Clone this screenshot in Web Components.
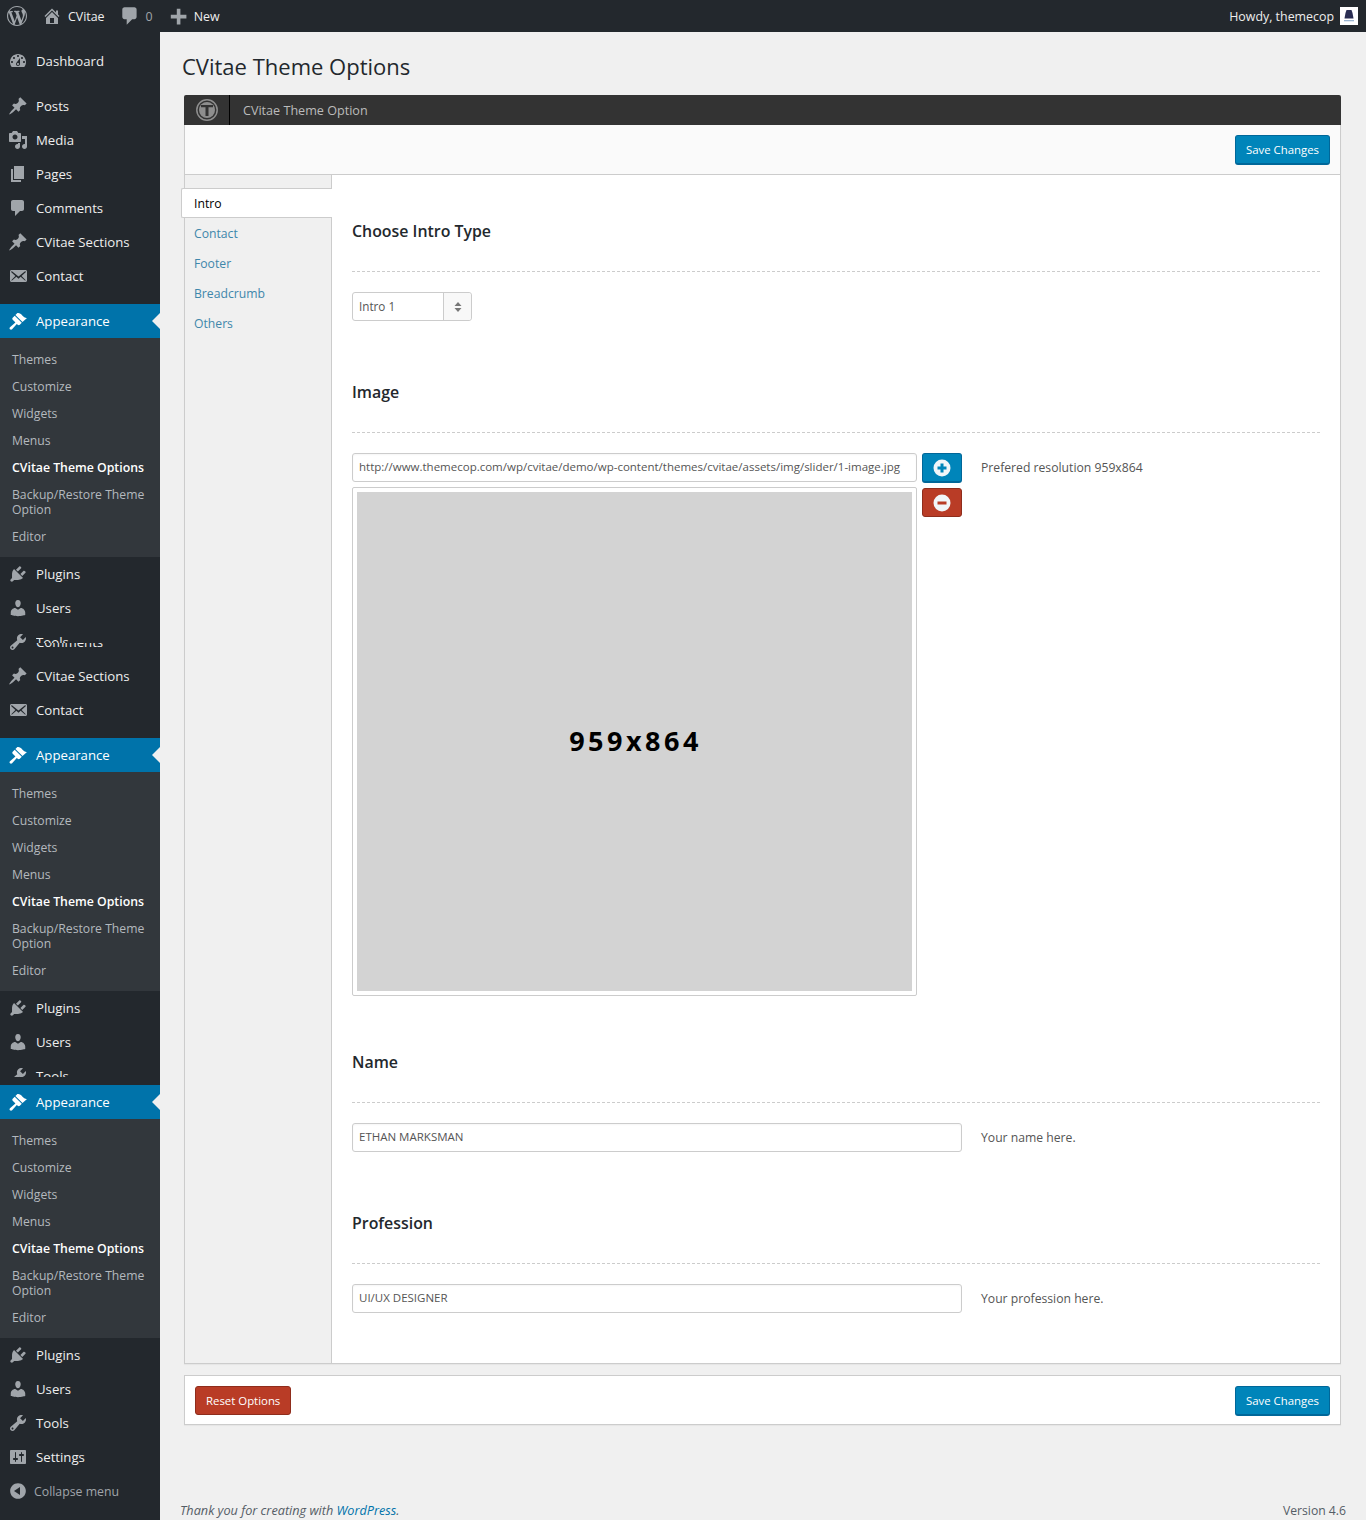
<!DOCTYPE html>
<html lang="en"><head><meta charset="utf-8"><title>CVitae Theme Options</title>
<style>
html,body{margin:0;padding:0}
body{font-family:"Open Sans","Liberation Sans",sans-serif;background:#f0f0f0;color:#444;width:1366px;min-height:1520px;overflow-x:hidden}
</style></head><body>
<wp-shell></wp-shell>
<script>
const P={
wp:'M20 10c0-5.510-4.490-10-10-10C4.480 0 0 4.490 0 10c0 5.520 4.480 10 10 10 5.510 0 10-4.480 10-10zM7.780 15.370L4.370 6.220c.550-.020 1.170-.080 1.170-.080.500-.060.440-1.130-.060-1.110 0 0-1.450.110-2.370.110-.180 0-.370 0-.580-.010C4.120 2.690 6.870 1.110 10 1.110c2.330 0 4.450.870 6.050 2.340-.680-.110-1.650.390-1.650 1.580 0 .740.450 1.360.900 2.100.350.610.550 1.360.550 2.460 0 1.490-1.400 5-1.400 5l-3.030-8.370c.540-.020.820-.170.820-.170.500-.050.440-1.250-.060-1.220 0 0-1.440.120-2.380.120-.870 0-2.330-.120-2.330-.120-.500-.030-.560 1.200-.060 1.220l.920.080 1.260 3.410zM17.410 10c.240-.640.740-1.870.430-4.250.700 1.290 1.050 2.710 1.050 4.250 0 3.290-1.730 6.240-4.400 7.780.970-2.590 1.940-5.210 2.920-7.780zM6.100 18.090C3.120 16.650 1.110 13.530 1.110 10c0-1.300.230-2.480.720-3.590C3.250 10.300 4.670 14.200 6.100 18.090zm4.030-6.630l2.580 6.980c-.860.290-1.760.450-2.710.450-.790 0-1.570-.110-2.290-.330.810-2.380 1.620-4.740 2.420-7.100z',
home:'M16 8.500l1.530 1.530-1.060 1.060L10 4.620l-6.470 6.470-1.060-1.060L10 2.500l4 4v-2h2v4zm-6-2.460l6 5.990V18H4v-5.970zM12 17v-5H8v5h4z',
plus:'M17 9v3h-5v5H9v-5H4V9h5V4h3v5h5z',
dashboard:'M3.760 16h12.480c1.100-1.370 1.760-3.110 1.760-5 0-4.420-3.580-8-8-8s-8 3.580-8 8c0 1.890.660 3.630 1.760 5zM10 4c.550 0 1 .450 1 1s-.450 1-1 1-1-.450-1-1 .450-1 1-1zM6 6c.550 0 1 .450 1 1s-.450 1-1 1-1-.450-1-1 .450-1 1-1zm8 0c.550 0 1 .450 1 1s-.450 1-1 1-1-.450-1-1 .450-1 1-1zm-5.370 5.550L12 7v6c0 1.100-.900 2-2 2s-2-.900-2-2c0-.570.240-1.080.630-1.450zM4 10c.550 0 1 .450 1 1s-.450 1-1 1-1-.450-1-1 .450-1 1-1zm12 0c.550 0 1 .450 1 1s-.450 1-1 1-1-.450-1-1 .450-1 1-1zm-5 3c0-.550-.450-1-1-1s-1 .450-1 1 .450 1 1 1 1-.450 1-1z',
post:'M10.440 3.020l1.820-1.820 6.360 6.350-1.830 1.820c-1.050-.680-2.480-.570-3.410.360l-.750.750c-.920.930-1.040 2.350-.350 3.410l-1.830 1.820-2.410-2.410-2.800 2.790c-.420.420-3.380 2.710-3.800 2.290s1.860-3.390 2.280-3.810l2.790-2.790L4.100 9.360l1.830-1.820c1.050.690 2.480.570 3.400-.360l.750-.750c.930-.920 1.050-2.350.360-3.410z',
media:'M13 11V4c0-.550-.450-1-1-1h-1.670L9 1H5L3.670 3H2c-.550 0-1 .450-1 1v7c0 .550.450 1 1 1h10c.550 0 1-.450 1-1zM7 4.500c1.380 0 2.500 1.120 2.500 2.500S8.380 9.500 7 9.500 4.500 8.380 4.500 7 5.620 4.500 7 4.500zM14 6h5v10.500c0 1.380-1.120 2.500-2.500 2.500S14 17.880 14 16.500s1.120-2.500 2.500-2.500c.170 0 .340.020.500.050V9h-3V6zm-4 8.050V13h2v3.500c0 1.380-1.120 2.500-2.500 2.500S7 17.880 7 16.500 8.120 14 9.500 14c.170 0 .340.020.500.050z',
page:'M6 15V2h10v13H6zm-1 1h8v2H3V5h2v11z',
comment:'M5 2h9c1.100 0 2 .900 2 2v7c0 1.100-.900 2-2 2h-2l-5 5v-5H5c-1.100 0-2-.900-2-2V4c0-1.100.900-2 2-2z',
email:'M19 14.500v-9c0-.830-.670-1.500-1.500-1.500H3.490c-.830 0-1.500.670-1.500 1.500v9c0 .830.670 1.500 1.500 1.500H17.500c.830 0 1.500-.670 1.500-1.500zm-1.310-9.110c.330.330.150.670-.030.840L13.600 9.900l3.900 4.060c.120.140.200.360.060.510-.130.160-.430.150-.560.050l-4.370-3.730-2.140 1.950-2.130-1.950-4.370 3.730c-.130.100-.430.110-.56-.050-.140-.150-.060-.370.060-.510l3.900-4.060-4.060-3.670c-.180-.170-.360-.510-.030-.840s.670-.170.950.070l6.240 5.040 6.250-5.040c.280-.240.620-.400.950-.070z',
brush:'M14.500 11 7.400 4l1.500-1.500c.5-.6 2.300-.5 3.500.3 1.200.8 1.400 1.300 2.700 2.400 1.200 1.100 2.200 1.600 3.200 1.800l.7.1zM6.700 4.700l7.100 7.100-2 2c-.6.6-1.500.5-2.100 0l-.9-.9-4.700 5.400c-.6.6-1.600.6-2.100 0-.6-.5-.6-1.500 0-2.100l5.400-4.700-.9-.9-1.800-1.800c-.5-.6-.6-1.500 0-2.100z',
plugin:'M13.110 4.360L9.870 7.600 8 5.730l3.240-3.240c.350-.340 1.050-.200 1.560.320.520.510.660 1.210.310 1.550zm-8 1.770l.910-1.120 9.010 9.010-1.190.840c-.710.710-2.630 1.160-3.820 1.160H6.140L4.900 17.260c-.590.590-1.540.590-2.120 0-.590-.580-.590-1.530 0-2.120l1.240-1.240v-3.880c0-1.130.400-3.190 1.090-3.890zm7.260 3.970l3.240-3.240c.340-.350 1.040-.210 1.550.310.520.510.660 1.210.310 1.560l-3.240 3.250z',
users:'M10 9.250c-2.270 0-2.730-3.440-2.730-3.440C7 4.020 7.820 2 9.970 2c2.160 0 2.980 2.020 2.710 3.810 0 0-.410 3.440-2.680 3.440zm0 2.570L12.720 10c2.390 0 4.520 2.330 4.520 4.530v2.490s-3.650 1.130-7.240 1.130c-3.650 0-7.240-1.130-7.240-1.130v-2.490c0-2.250 1.940-4.480 4.470-4.480z',
tools:'M16.680 9.770c-1.340 1.340-3.300 1.670-4.950.990l-5.410 6.520c-.990.990-2.590.990-3.570 0-.990-.980-.990-2.580 0-3.570l6.520-5.420c-.680-1.650-.350-3.610.990-4.950 1.280-1.280 3.120-1.620 4.720-1.060l-2.890 2.890 2.820 2.820 2.860-2.870c.530 1.580.180 3.390-1.090 4.650zM3.810 16.210c.400.390 1.030.390 1.420 0 .400-.400.400-1.030 0-1.430-.390-.390-1.020-.390-1.420 0-.390.400-.390 1.030 0 1.430z',
settings:'M18 16V4c0-.550-.450-1-1-1H3c-.550 0-1 .450-1 1v12c0 .550.450 1 1 1h14c.550 0 1-.450 1-1zM8 11h1c.550 0 1 .450 1 1s-.450 1-1 1H8v1.500c0 .280-.220.500-.500.500s-.500-.220-.500-.500V13H6c-.550 0-1-.450-1-1s.450-1 1-1h1V5.500c0-.280.220-.500.500-.500s.500.220.500.500V11zm5-2h-1c-.550 0-1-.450-1-1s.450-1 1-1h1V5.500c0-.280.220-.500.500-.500s.500.220.500.500V7h1c.550 0 1 .450 1 1s-.450 1-1 1h-1v5.500c0 .280-.220.500-.500.500s-.500-.220-.500-.500V9z',
collapse:'M10 2.160c4.330 0 7.840 3.510 7.840 7.840s-3.510 7.840-7.840 7.840S2.160 14.330 2.160 10 5.670 2.160 10 2.160zm2 11.840V6l-6 4z'
};
const svg=(n,s=20,c='currentColor')=>`<svg width="${s}" height="${s}" viewBox="0 0 20 20" fill="${c}" fill-rule="evenodd" style="display:block;flex:none"><path d="${P[n]}"/></svg>`;
const def=(name,fn)=>customElements.define(name,class extends HTMLElement{connectedCallback(){if(this.shadowRoot)return;const r=this.attachShadow({mode:'open'});r.innerHTML=fn(this)}});

def('wp-topbar',()=>`<style>
:host{display:flex;align-items:center;height:32px;background:#23282d;color:#eee;font-size:12.4px}
.i{display:flex;align-items:center;color:#a0a5aa}
.t{color:#eee}
.sp{flex:1}
.av{width:18px;height:18px;background:#fff;margin:0 8px 0 6px;display:block}
</style>
<span class="i" style="margin-left:7px">${svg('wp',20)}</span>
<span class="i" style="margin-left:15px">${svg('home',20)}</span>
<span class="t" style="margin-left:6px">CVitae</span>
<span class="i" style="margin-left:14px">${svg('comment',22)}</span>
<span class="i" style="margin-left:5px">0</span>
<span class="i" style="margin-left:13px">${svg('plus',24)}</span>
<span class="t" style="margin-left:4px">New</span>
<span class="sp"></span>
<span class="t">Howdy, themecop</span>
<svg class="av" viewBox="0 0 18 18"><rect width="18" height="18" fill="#fff"/><path d="M6.500 3h5l1 3 1 5.500h-9L5.500 6z" fill="#2a2d52"/><rect x="4" y="13" width="10" height="1.300" fill="#9ab4d0"/></svg>`);

def('wp-item',h=>{
 const ic=h.getAttribute('icon'),active=h.hasAttribute('active'),cut=h.getAttribute('cut'),ghost=h.getAttribute('ghost');
 return `<style>
:host{display:block;height:${cut||34}px;overflow:hidden}
.r{display:flex;align-items:center;height:34px;color:#eee;font-size:13.2px;position:relative;${active?'background:#0073aa;color:#fff;':''}${cut?'clip-path:inset(0 0 16px 0);':''}}
.ic{margin:0 8px;color:${active?'#fff':'#a0a5aa'}}
.t{line-height:34px}
.top{clip-path:inset(0 0 47% 0)}
.low{position:absolute;left:36px;top:0;clip-path:inset(53% 0 0 0)}
.ar{position:absolute;right:0;top:9px;border:8px solid transparent;border-right-color:#f0f0f0;border-left:0}
</style><div class="r"><span class="ic">${svg(ic)}</span><span class="t ${ghost?'top':''}"><slot></slot></span>${ghost?`<span class="t low">${ghost}</span>`:''}${active?'<i class="ar"></i>':''}</div>`});

def('wp-sub',()=>`<style>
:host{display:block;background:#32373c;padding:8px 0 7px;font-size:12.2px;line-height:15px;color:#b4b9be}
div{padding:6px 12px}
b{color:#fff;font-weight:600;display:block;padding:6px 12px;font-size:12.3px}
</style><div>Themes</div><div>Customize</div><div>Widgets</div><div>Menus</div><b>CVitae Theme Options</b><div>Backup/Restore Theme Option</div><div>Editor</div>`);

def('wp-collapse',()=>`<style>
:host{display:flex;align-items:center;height:34px;color:#a0a5aa;font-size:12.3px}
span{margin-left:8px;margin-right:6px}
</style><span>${svg('collapse')}</span>Collapse menu`);

def('wp-side',()=>{
 const it=(i,t,x='')=>`<wp-item icon="${i}" ${x}>${t}</wp-item>`;
 const gap='<div style="height:11px"></div>';
 const ap=`${it('brush','Appearance','active')}<wp-sub></wp-sub>`;
 return `<style>:host{display:block;width:160px;background:#23282d;padding-top:12px;box-sizing:border-box}</style>
${it('dashboard','Dashboard')}${gap}
${it('post','Posts')}${it('media','Media')}${it('page','Pages')}${it('comment','Comments')}${it('post','CVitae Sections')}${it('email','Contact')}${gap}
${ap}
${it('plugin','Plugins')}${it('users','Users')}${it('tools','Tools','ghost="Comments"')}${it('post','CVitae Sections')}${it('email','Contact')}${gap}
${ap}
${it('plugin','Plugins')}${it('users','Users')}${it('tools','Tools','cut="26"')}
${ap}
${it('plugin','Plugins')}${it('users','Users')}${it('tools','Tools')}${it('settings','Settings')}<wp-collapse></wp-collapse>`});

def('wp-btn',h=>{
 const red=h.hasAttribute('red');
 return `<style>
:host{display:inline-flex}
.b{display:flex;align-items:center;justify-content:center;box-sizing:border-box;height:${red?29:30}px;padding:0 10px;border:1px solid ${red?'#8f2d1c':'#006799'};border-bottom-width:${red?1:2}px;border-radius:3px;background:${red?'#b93c26':'#0085ba'};color:#fff;font-size:11.4px;white-space:nowrap}
</style><div class="b"><slot></slot></div>`});

def('icon-btn',h=>{
 const m=h.getAttribute('kind')==='minus',c=m?'#b93c26':'#0085ba';
 return `<style>
:host{display:block;width:40px}
.b{box-sizing:border-box;height:${m?29:30}px;border:1px solid ${m?'#8f2d1c':'#006799'};border-bottom-width:${m?1:2}px;border-radius:3px;background:${c};display:flex;align-items:center;justify-content:center}
</style><div class="b"><svg width="18" height="18" viewBox="0 0 18 18"><circle cx="9" cy="9" r="8.500" fill="#f1f6f9"/><rect x="4.500" y="7.500" width="9" height="3" fill="${c}"/>${m?'':`<rect x="7.500" y="4.500" width="3" height="9" fill="${c}"/>`}</svg></div>`});

def('text-box',h=>`<style>
:host{display:block;box-sizing:border-box;height:29px;border:1px solid #ccc;border-radius:3px;background:#fff;padding:0 6px;line-height:26px;font-size:11.5px;color:#555;white-space:nowrap;overflow:hidden;box-shadow:inset 0 1px 2px rgba(0,0,0,.04)}
</style><slot></slot>`);

def('select-box',()=>`<style>
:host{display:flex;box-sizing:border-box;width:120px;height:29px;border:1px solid #ccc;border-radius:3px;background:#fff;font-size:11.7px;color:#555}
.v{flex:1;padding-left:6px;line-height:27px}
.a{width:27px;border-left:1px solid #ccc;background:#f8f8f8;display:flex;align-items:center;justify-content:center;border-radius:0 3px 3px 0}
</style><div class="v"><slot></slot></div><div class="a"><svg width="8" height="10" viewBox="0 0 8 10" fill="#777"><path d="M4 0l3.500 4h-7zM4 10L.5 6h7z"/></svg></div>`);

def('opt-section',h=>`<style>
:host{display:block;padding-bottom:${h.getAttribute('after')||59}px}
h3{margin:0;font-size:15.9px;line-height:24px;font-weight:600;color:#23282d;height:24px;padding-bottom:28px;border-bottom:1px dashed #ccc;margin-bottom:20px;box-sizing:content-box}
</style><h3>${h.getAttribute('label')}</h3><slot></slot>`);

def('field-row',h=>`<style>
:host{display:flex;gap:19px;align-items:center}
.f{width:610px;flex:none}
.h{font-size:12.2px;color:#555}
</style><div class="f"><slot></slot></div><div class="h">${h.getAttribute('hint')}</div>`);

def('image-field',()=>`<style>
:host{display:flex;align-items:flex-start}
.l{width:565px;flex:none}
.btns{margin-left:5px;display:flex;flex-direction:column;gap:5px}
.h{margin-left:19px;font-size:12.2px;color:#555;line-height:29px}
.pv{box-sizing:border-box;margin-top:5px;height:509px;border:1px solid #ccc;border-radius:2px;padding:4px;background:#fff}
.ph{box-sizing:border-box;height:499px;padding:0 0 2px 2px;background:#d3d3d3;display:flex;align-items:center;justify-content:center;font-weight:700;font-size:27px;letter-spacing:3.500px;color:#000;font-family:"Open Sans",sans-serif}
</style><div class="l"><text-box>http://www.themecop.com/wp/cvitae/demo/wp-content/themes/cvitae/assets/img/slider/1-image.jpg</text-box><div class="pv"><div class="ph">959x864</div></div></div>
<div class="btns"><icon-btn kind="plus"></icon-btn><icon-btn kind="minus"></icon-btn></div><div class="h">Prefered resolution 959x864</div>`);

def('tab-nav',()=>`<style>
:host{display:block;width:147px;box-sizing:border-box;background:#f0f0f0;border-right:1px solid #ccc;flex:none;font-size:12.2px;color:#3f87ab}
.top{height:13px}
.on{box-sizing:border-box;height:30px;margin:0 -1px 0 -4px;background:#fff;border:1px solid #ccc;border-right:0;border-radius:2px 0 0 2px;padding-left:12px;line-height:29px;color:#000;position:relative}
.t{padding-left:9px;height:30px;line-height:31px}
</style><div class="top"></div><div class="on">Intro</div><div class="t">Contact</div><div class="t">Footer</div><div class="t">Breadcrumb</div><div class="t">Others</div>`);

def('theme-panel',()=>`<style>
:host{display:block;width:1157px;box-sizing:border-box;margin-left:24px}
.hd{display:flex;align-items:center;height:30px;background:#333;color:#bbb;font-size:12.6px;border-radius:2px 2px 0 0}
.lg{width:46px;height:30px;box-sizing:border-box;border-right:1px solid #000;display:flex;align-items:center;justify-content:center;margin-right:13px}
.box{background:#fff;border:1px solid #ccc;border-top:0;box-shadow:0 1px 1px rgba(0,0,0,.04)}
.tb{display:flex;justify-content:flex-end;align-items:center;height:49px;padding-right:10px;background:#fafafa;border-bottom:1px solid #ccc}
.bd{display:flex}
.m{flex:1;padding:44px 20px 50px}
.ft{margin-top:11px;background:#fff;border:1px solid #ccc;height:50px;box-sizing:border-box;display:flex;justify-content:space-between;align-items:flex-start;padding:10px;box-shadow:0 1px 1px rgba(0,0,0,.04)}
</style>
<div class="hd"><div class="lg"><svg width="22" height="22" viewBox="0 0 22 22"><circle cx="11" cy="11" r="10.200" fill="none" stroke="#8e8e8e" stroke-width="1.500"/><circle cx="11" cy="11" r="8" fill="#8e8e8e"/><path d="M5 6h12v2.300h-4.500V17h-3V8.300H5z" fill="#333"/></svg></div>CVitae Theme Option</div>
<div class="box"><div class="tb"><wp-btn>Save Changes</wp-btn></div>
<div class="bd"><tab-nav></tab-nav><div class="m">
<opt-section label="Choose Intro Type"><select-box>Intro 1</select-box></opt-section>
<opt-section label="Image" after="54"><image-field></image-field></opt-section>
<opt-section label="Name"><field-row hint="Your name here."><text-box>ETHAN MARKSMAN</text-box></field-row></opt-section>
<opt-section label="Profession" after="0"><field-row hint="Your profession here."><text-box>UI/UX DESIGNER</text-box></field-row></opt-section>
</div></div></div>
<div class="ft"><wp-btn red>Reset Options</wp-btn><wp-btn>Save Changes</wp-btn></div>`);

def('wp-footer',()=>`<style>
:host{display:flex;justify-content:space-between;height:20px;line-height:20px;margin-top:75px;padding:0 20px;font-size:12.7px;color:#555d66}
i span{color:#0073aa}
.v{font-size:12.2px;line-height:21px}
</style><i>Thank you for creating with <span>WordPress</span>.</i><span class="v">Version 4.6</span>`);

def('wp-shell',()=>`<style>
:host{display:block}
.w{display:grid;grid-template-columns:160px 1fr}
h1{margin:20px 0 14px 22px;font-size:22px;line-height:29px;font-weight:400;color:#23282d}
</style><wp-topbar></wp-topbar><div class="w"><wp-side></wp-side><main><h1>CVitae Theme Options</h1><theme-panel></theme-panel><wp-footer></wp-footer></main></div>`);
</script></body></html>
